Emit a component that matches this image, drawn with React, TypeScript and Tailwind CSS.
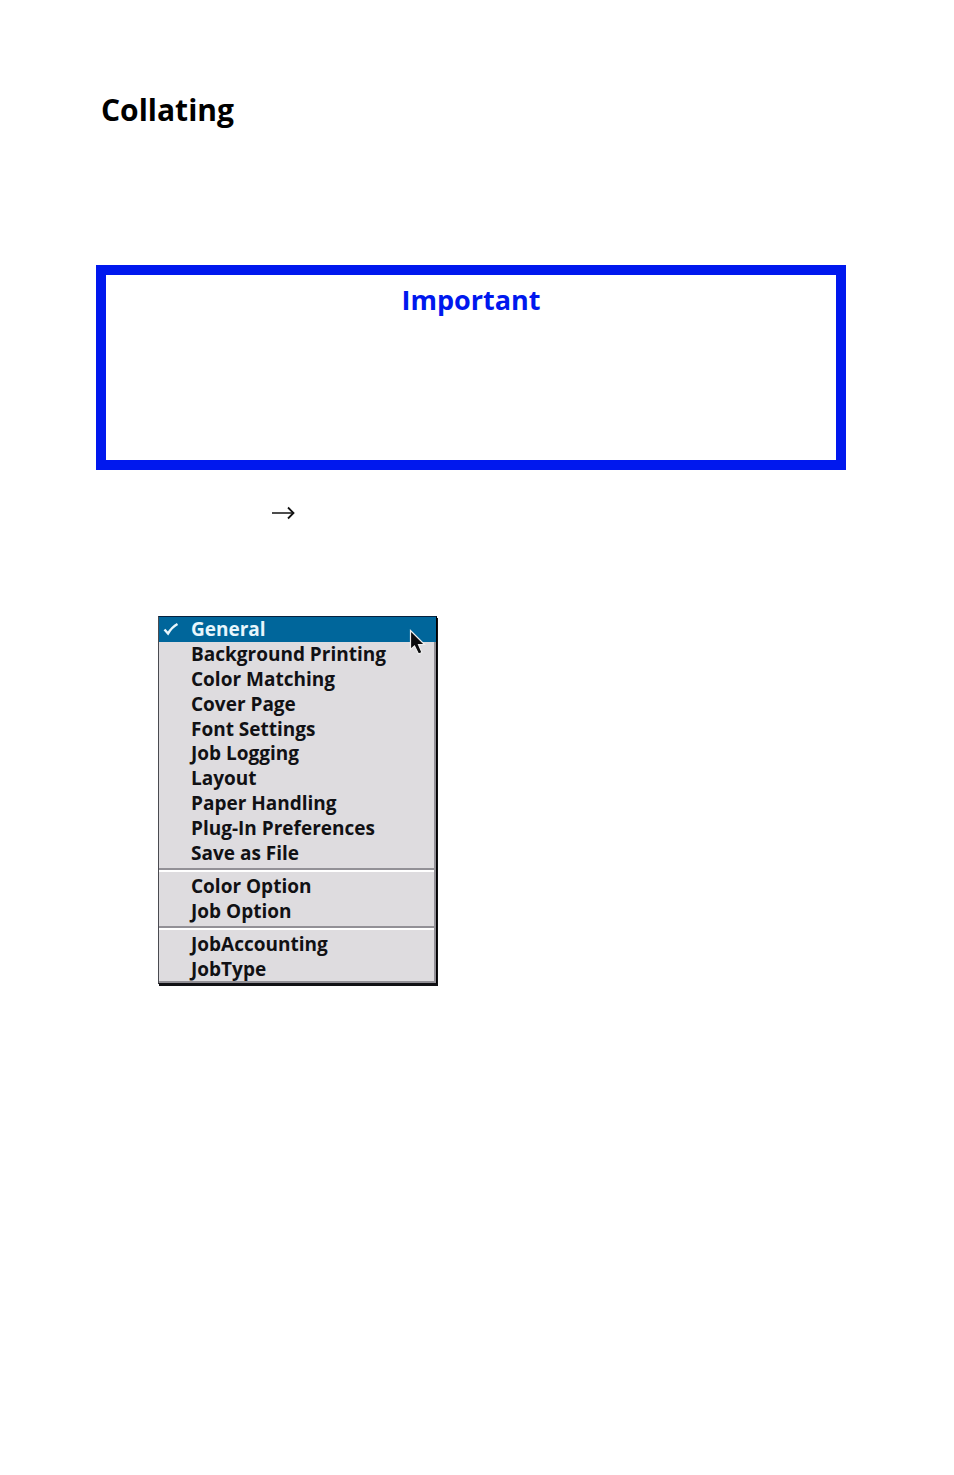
const groups = [
  {
    height: "h-[248px]",
    items: [
      "General",
      "Background Printing",
      "Color Matching",
      "Cover Page",
      "Font Settings",
      "Job Logging",
      "Layout",
      "Paper Handling",
      "Plug-In Preferences",
      "Save as File",
    ],
  },
  { height: "h-[49px]", items: ["Color Option", "Job Option"] },
  { height: "h-[49px]", items: ["JobAccounting", "JobType"] },
];

function Check() {
  return (
    <svg className="h-4 w-4" viewBox="0 0 16 16" fill="none" aria-hidden="true">
      <path d="M1.5 8.5 5 12.5 Q9 6 14.5 3" stroke="#e8f6fc" strokeWidth="2.4" />
    </svg>
  );
}

function Pointer() {
  return (
    <svg className="absolute top-3 right-2 h-7 w-5" viewBox="0 0 20 28" aria-hidden="true">
      <path
        d="M2.5 1.5V20.5L6.5 17L10.5 25L14 23.5L10.5 15.5H16.5Z"
        fill="#0b0b0d"
        stroke="#eeeeee"
        strokeWidth="1.2"
      />
    </svg>
  );
}

function PaneMenu() {
  return (
    <div
      role="menu"
      className="relative w-[279px] border border-t-[#06213f] border-r-black border-b-[#111115] border-l-[#4a4a50] bg-[#dedcdf] shadow-[1px_2px_0_#111115]"
    >
      <div className="border-r-2 border-b-2 border-[#929096]">
        {groups.map((group, g) => (
          <div key={g}>
            {g > 0 && (
              <div role="separator" className="flex h-[9px] flex-col pt-[3px]">
                <div className="h-[2px] bg-[#929096]" />
                <div className="h-[2px] bg-white" />
              </div>
            )}
            <div className={"flex flex-col " + group.height}>
              {group.items.map((item) => (
                <button
                  key={item}
                  role="menuitem"
                  className={
                    "flex flex-1 items-center text-left text-[19px] leading-6 font-bold whitespace-nowrap " +
                    (item === "General" ? "-mr-[2px] bg-[#00669b] text-[#e8f6fc]" : "text-[#111114]")
                  }
                >
                  <span className="flex w-8 shrink-0 pl-1">{item === "General" && <Check />}</span>
                  {item}
                </button>
              ))}
            </div>
          </div>
        ))}
      </div>
      <Pointer />
    </div>
  );
}

export default function App() {
  return (
    <main className="min-h-screen bg-white px-24 pt-[90px] font-['Open_Sans','Noto_Sans',sans-serif]">
      <h1 className="pl-[5px] text-[30px] leading-10 font-bold text-black">Collating</h1>
      <section className="mt-[135px] mr-3 h-[205px] border-[10px] border-[#0018ee] pt-[7px]">
        <h2 className="text-center text-[27px] leading-9 font-bold text-[#0018ee]">Important</h2>
      </section>
      <div className="mt-9 pl-44">
        <svg className="h-[14px] w-6" viewBox="0 0 24 14" fill="none" stroke="#111111" aria-label="then" role="img">
          <path d="M0 7H21" strokeWidth="1.5" />
          <path d="M16 1.5 21.5 7 16 12.5" strokeWidth="1.8" />
        </svg>
      </div>
      <div className="mt-24 pl-[62px]">
        <PaneMenu />
      </div>
    </main>
  );
}
